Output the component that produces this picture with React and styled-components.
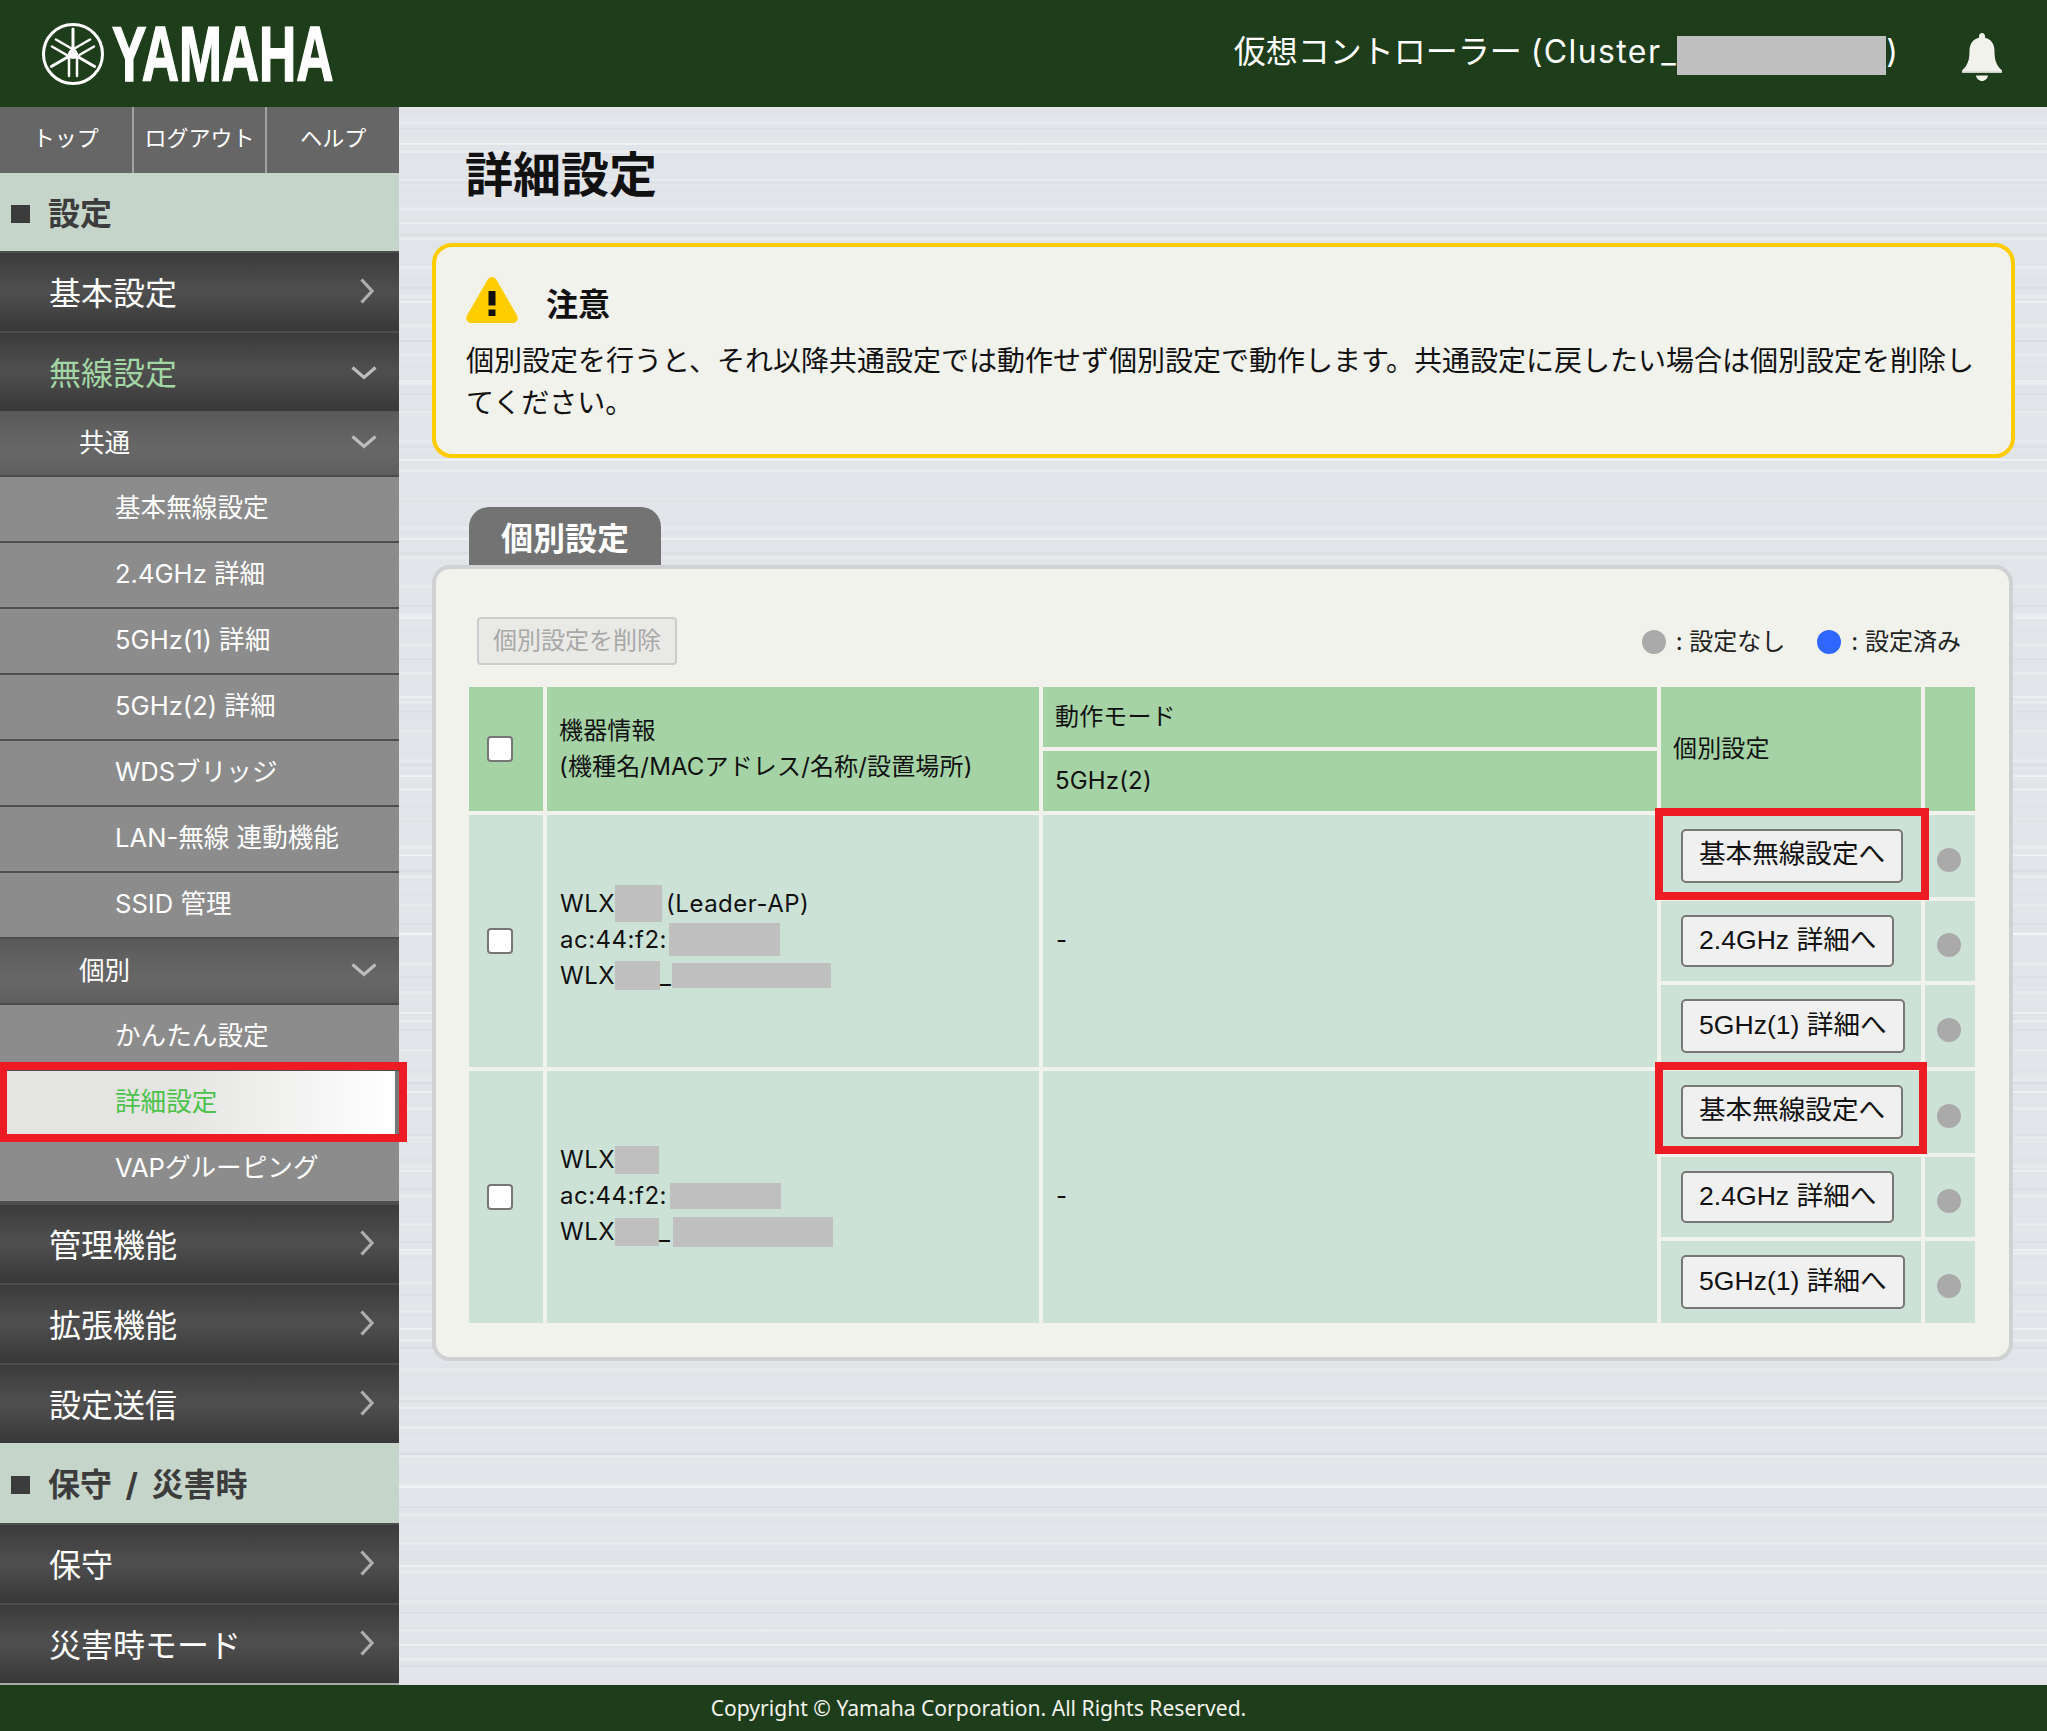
import React from "react";
import styled, { createGlobalStyle } from "styled-components";

const GlobalStyle = createGlobalStyle`
  html, body {
    margin: 0;
    padding: 0;
  }
  body {
    font-family: Inter, "Noto Sans CJK JP", sans-serif;
    color: #111;
  }
  * {
    box-sizing: border-box;
  }
`;

const Page = styled.div`
  width: 2047px;
  height: 1731px;
  display: flex;
  flex-direction: column;
  overflow: hidden;
`;

const Header = styled.header`
  height: 107px;
  flex: none;
  background: #1e3d1a;
  display: flex;
  align-items: center;
  padding: 0 45px 0 41px;
`;

const ControllerName = styled.div`
  margin-left: auto;
  padding-bottom: 3px;
  display: flex;
  align-items: center;
  color: #fff;
  font-size: 32px;
  line-height: 40px;
  white-space: pre;
`;

const LatinPart = styled.span`
  letter-spacing: 1.4px;
`;

const BellWrap = styled.div`
  margin-left: 64px;
  width: 40px;
  height: 48px;
  margin-top: 7px;
`;

const Middle = styled.div`
  flex: 1;
  display: flex;
  min-height: 0;
`;

const Sidebar = styled.nav`
  width: 399px;
  flex: none;
  display: flex;
  flex-direction: column;
  border-bottom: 2px solid #a9a9a9;
  position: relative;
  z-index: 2;
`;

const UtilBar = styled.div`
  height: 66px;
  display: flex;
  background: #666;
`;

const UtilLink = styled.a`
  flex: 1;
  display: flex;
  align-items: center;
  justify-content: center;
  padding-bottom: 8px;
  color: #fff;
  font-size: 22px;
  & + & {
    border-left: 2px solid #a3a3a3;
  }
`;

const SectionHead = styled.div`
  height: ${(p) => p.$height}px;
  display: flex;
  align-items: center;
  padding: 0 0 2px 11px;
  background: #c6d5ca;
  color: #3c3c3c;
  font-size: 32px;
  font-weight: 700;
  word-spacing: 6px;
`;

const SectionMark = styled.span`
  width: 19px;
  height: 18px;
  margin: 6px 18px 0 0;
  background: #3c3c3c;
`;

const TopItem = styled.div`
  height: 80px;
  display: flex;
  align-items: center;
  justify-content: space-between;
  padding: 0 22px 0 49px;
  font-size: 32px;
  color: ${(p) => (p.$open ? "#a3d6a5" : "#fff")};
  background: linear-gradient(180deg, #3a3a3a 0%, #4f4f4f 50%, #383838 100%);
  box-shadow: inset 0 2px 0 #4d4d4d;
`;

const SubItem = styled.div`
  height: 66px;
  display: flex;
  align-items: center;
  justify-content: space-between;
  padding: 0 22px 6px 79px;
  font-size: 25.6px;
  color: #fff;
  background: linear-gradient(180deg, #5a5a5a 0%, #676767 60%, #5f5f5f 100%);
  border-bottom: 2px solid #4a4a4a;
`;

const LeafItem = styled.div`
  height: 66px;
  display: flex;
  align-items: center;
  padding: 0 0 8px 115px;
  font-size: 25.6px;
  color: ${(p) => (p.$active ? "#4cc24c" : "#fff")};
  background: ${(p) =>
    p.$active
      ? "linear-gradient(90deg, #e4e4e2 0%, #e4e4e2 45%, #fff 100%)"
      : "#8c8c8c"};
  border-bottom: 2px solid #4f4f4f;
  border-right: ${(p) => (p.$active ? "4px solid #777" : "none")};
  position: relative;
`;

const SideMarker = styled.span`
  position: absolute;
  z-index: 1;
  top: -9px;
  bottom: -7px;
  left: 0;
  right: -12px;
  border: 8px solid #ed1c24;
  border-left-width: 7px;
`;

const Main = styled.main`
  flex: 1;
  min-width: 0;
  padding: 34px 32px 0 33px;
  background-color: #e1e4e8;
  background-image:
    repeating-linear-gradient(180deg, rgba(255,255,255,0) 0 36px, rgba(255,255,255,.4) 36px 38px, rgba(255,255,255,0) 38px 79px),
    repeating-linear-gradient(180deg, rgba(255,255,255,0) 0 14px, rgba(255,255,255,.22) 14px 17px, rgba(255,255,255,0) 17px 29px),
    repeating-linear-gradient(180deg, rgba(110,115,125,0) 0 21px, rgba(110,115,125,.05) 21px 23px, rgba(110,115,125,0) 23px 53px),
    repeating-linear-gradient(180deg, rgba(255,255,255,.1) 0 2px, rgba(255,255,255,0) 2px 11px);
`;

const PageTitle = styled.h1`
  margin: 0 0 34px 33px;
  font-size: 48px;
  line-height: 68px;
  font-weight: 700;
  color: #111;
`;

const Notice = styled.section`
  height: 215px;
  background: #f1f2ec;
  border: 4px solid #fc0;
  border-radius: 20px;
  padding: 30px 30px 0;
`;

const NoticeHead = styled.div`
  display: flex;
  align-items: center;
  height: 46px;
  gap: 28px;
  margin-bottom: 17px;
  font-size: 32px;
  font-weight: 700;
`;

const NoticeLabel = styled.span`
  padding-top: 4px;
`;

const NoticeBody = styled.p`
  margin: 0;
  font-size: 28px;
  line-height: 42px;
`;

const Tab = styled.div`
  width: 192px;
  height: 58px;
  margin: 49px 0 0 37px;
  background: #737373;
  border-radius: 20px 20px 0 0;
  color: #fff;
  font-size: 32px;
  font-weight: 700;
  display: flex;
  align-items: center;
  justify-content: center;
`;

const Panel = styled.section`
  width: 1581px;
  height: 796px;
  background: #f1f2ec;
  border: 4px solid #cfd1d3;
  border-radius: 18px;
  padding: 48px 34px 0 33px;
`;

const Toolbar = styled.div`
  height: 48px;
  margin-bottom: 22px;
  padding: 0 14px 0 8px;
  display: flex;
  align-items: center;
  justify-content: space-between;
`;

const DeleteButton = styled.button`
  width: 200px;
  height: 48px;
  padding: 0 0 5px;
  font-family: inherit;
  font-size: 24px;
  color: #a8a8a8;
  background: #e9e9e6;
  border: 2px solid #ccc;
  border-radius: 4px;
`;

const Legend = styled.div`
  display: flex;
  align-items: center;
  gap: 32px;
  font-size: 24px;
  color: #222;
`;

const LegendItem = styled.span`
  display: flex;
  align-items: center;
  gap: 10px;
  padding-bottom: 3px;
`;

const Dot = styled.span`
  display: block;
  width: 24px;
  height: 24px;
  border-radius: 50%;
  background: ${(p) => (p.$blue ? "#2f66ff" : "#aaa")};
`;

const LegendDot = styled(Dot)`
  margin-top: 5px;
`;

const Table = styled.table`
  table-layout: fixed;
  width: 1510px;
  margin: -4px;
  border-collapse: separate;
  border-spacing: 4px;
  font-size: 24px;
  line-height: 36px;
  color: #111;
`;

const HeadCell = styled.th`
  height: ${(p) => p.$height || 60}px;
  padding: 0 12px 1px;
  font-weight: 400;
  text-align: left;
  letter-spacing: 0.15px;
  background: #a5d3a5;
`;

const BoxHead = styled(HeadCell)`
  padding: 0;
`;

const Cell = styled.td`
  height: ${(p) => p.$height || 82}px;
  padding: 0 13px 3px;
  background: #cde2d6;
  position: relative;
`;

const BoxCell = styled(Cell)`
  padding: 0;
`;

const ButtonCell = styled(Cell)`
  padding: 0 0 0 20px;
`;

const DotCell = styled(Cell)`
  padding: 7px 0 0 12px;
`;

const Check = styled.input.attrs({ type: "checkbox" })`
  appearance: none;
  display: block;
  width: 26px;
  height: 26px;
  margin: 0 0 0 18px;
  background: #fff;
  border: 2px solid #767676;
  border-radius: 4px;
`;

const GoButton = styled.button`
  display: block;
  height: ${(p) => p.$height || 54}px;
  padding: 0 16px ${(p) => p.$lift || 8}px;
  font-family: "Liberation Sans", "Noto Sans CJK JP", sans-serif;
  font-size: 26.6px;
  color: #111;
  background: #f0f0f0;
  border: 2px solid #777;
  border-radius: 5px;
  white-space: nowrap;
`;

const CellMarker = styled.span`
  position: absolute;
  left: -6px;
  right: ${(p) => p.$right}px;
  top: ${(p) => p.$top}px;
  bottom: ${(p) => p.$bottom}px;
  border: 8px solid #ed1c24;
  z-index: 1;
`;

const Line = styled.div`
  display: flex;
  align-items: center;
  height: 36px;
  white-space: pre;
  letter-spacing: 0.5px;
`;

const Redact = styled.span`
  flex: none;
  display: block;
  width: ${(p) => p.$w}px;
  height: ${(p) => p.$h}px;
  margin: ${(p) => p.$top || 0}px ${(p) => p.$right || 0}px 0 ${(p) => p.$left || 0}px;
  background: #c0c0c0;
`;

const Footer = styled.footer`
  height: 46px;
  flex: none;
  background: #1e3d1a;
  color: #f1f2ec;
  font-family: "Noto Sans", sans-serif;
  font-size: 21.1px;
  display: flex;
  align-items: center;
  justify-content: center;
  padding: 0 90px 2px 0;
`;

const Chevron = styled.svg`
  flex: none;
  margin: ${(p) => p.$margin};
`;

function Logo() {
  const fork = (
    <g fill="none" stroke="#fff" strokeWidth="2.500" strokeLinecap="round">
      <path d="M32 7 L32 32" strokeWidth="3" />
      <path d="M28 54 V33 a4 4 0 0 1 8 0 V54" />
    </g>
  );
  return (
    <svg width="430" height="80" viewBox="0 -8 430 80">
      <circle cx="32" cy="32" r="29.5" fill="none" stroke="#fff" strokeWidth="3" />
      {fork}
      <g transform="rotate(120 32 32)">{fork}</g>
      <g transform="rotate(240 32 32)">{fork}</g>
      <text
        transform="translate(71 59) scale(0.67 1)"
        fill="#fff"
        stroke="#fff"
        strokeWidth="1.500"
        fontFamily="Liberation Sans, sans-serif"
        fontWeight="700"
        fontSize="77"
      >
        YAMAHA
      </text>
    </svg>
  );
}

function Bell() {
  return (
    <svg width="40" height="48" viewBox="0 0 40 48">
      <path
        fill="#f1f2ec"
        d="M20 0c1.8 0 3 1.4 3 3.2v1.6C29.4 6.2 32.5 11.6 32.5 18c0 9 1.6 14 7.5 19.5V40H0v-2.5C5.900 32 7.500 27 7.500 18 7.500 11.600 10.600 6.200 17 4.800V3.200C17 1.400 18.200 0 20 0z"
      />
      <path fill="#c9cdc4" d="M0 38.500h40V40H0z" />
      <path fill="#f1f2ec" d="M14 42.500h12c-.6 3.200-3 5.500-6 5.500s-5.400-2.300-6-5.500z" />
    </svg>
  );
}

function Warning() {
  return (
    <svg width="52" height="46" viewBox="0 0 52 46">
      <path
        fill="#fc0"
        d="M21.700 2.500c2-3.300 6.600-3.300 8.600 0l20.800 36c1.900 3.300-.4 7.500-4.300 7.500H5.200C1.300 46-1 41.800.9 38.500z"
      />
      <path fill="#111" d="M22.500 14h7v14.500h-7zM22.500 32.500h7v6.500h-7z" />
    </svg>
  );
}

function ChevronRight() {
  return (
    <Chevron width="14" height="26" viewBox="0 0 14 26" $margin="0 3px 0 0">
      <path d="M1.500 1.500 L12 13 L1.500 24.500" fill="none" stroke="#aeaeae" strokeWidth="3.200" />
    </Chevron>
  );
}

function ChevronDown() {
  return (
    <Chevron width="26" height="14" viewBox="0 0 26 14" $margin="3px 0 0 0">
      <path d="M1.500 1.500 L13 11.500 L24.500 1.500" fill="none" stroke="#bdbdbd" strokeWidth="3.200" />
    </Chevron>
  );
}

const leaves1 = [
  "基本無線設定",
  "2.4GHz 詳細",
  "5GHz(1) 詳細",
  "5GHz(2) 詳細",
  "WDSブリッジ",
  "LAN-無線 連動機能",
  "SSID 管理",
];

function Side() {
  return (
    <Sidebar>
      <UtilBar>
        <UtilLink>トップ</UtilLink>
        <UtilLink>ログアウト</UtilLink>
        <UtilLink>ヘルプ</UtilLink>
      </UtilBar>
      <SectionHead $height={78}>
        <SectionMark />
        設定
      </SectionHead>
      <TopItem>
        基本設定
        <ChevronRight />
      </TopItem>
      <TopItem $open>
        無線設定
        <ChevronDown />
      </TopItem>
      <SubItem>
        共通
        <ChevronDown />
      </SubItem>
      {leaves1.map((name) => (
        <LeafItem key={name}>{name}</LeafItem>
      ))}
      <SubItem>
        個別
        <ChevronDown />
      </SubItem>
      <LeafItem>かんたん設定</LeafItem>
      <LeafItem $active>
        詳細設定
        <SideMarker />
      </LeafItem>
      <LeafItem>VAPグルーピング</LeafItem>
      {["管理機能", "拡張機能", "設定送信"].map((name) => (
        <TopItem key={name}>
          {name}
          <ChevronRight />
        </TopItem>
      ))}
      <SectionHead $height={80}>
        <SectionMark />
        保守 / 災害時
      </SectionHead>
      {["保守", "災害時モード"].map((name) => (
        <TopItem key={name}>
          {name}
          <ChevronRight />
        </TopItem>
      ))}
    </Sidebar>
  );
}

function DeviceRows({ info, marker }) {
  return (
    <>
      <tr>
        <BoxCell rowSpan={3}>
          <Check />
        </BoxCell>
        <Cell rowSpan={3}>{info}</Cell>
        <Cell rowSpan={3}>-</Cell>
        <ButtonCell>
          <GoButton $lift={10}>基本無線設定へ</GoButton>
          {marker}
        </ButtonCell>
        <DotCell>
          <Dot />
        </DotCell>
      </tr>
      <tr>
        <ButtonCell $height={80}>
          <GoButton $height={52}>2.4GHz 詳細へ</GoButton>
        </ButtonCell>
        <DotCell $height={80}>
          <Dot />
        </DotCell>
      </tr>
      <tr>
        <ButtonCell>
          <GoButton>5GHz(1) 詳細へ</GoButton>
        </ButtonCell>
        <DotCell>
          <Dot />
        </DotCell>
      </tr>
    </>
  );
}

export default function App() {
  return (
    <>
      <GlobalStyle />
      <Page>
        <Header>
          <Logo />
          <ControllerName>
            仮想コントローラー <LatinPart>(Cluster_</LatinPart>
            <Redact $w={209} $h={39} $top={7} />)
          </ControllerName>
          <BellWrap>
            <Bell />
          </BellWrap>
        </Header>
        <Middle>
          <Side />
          <Main>
            <PageTitle>詳細設定</PageTitle>
            <Notice>
              <NoticeHead>
                <Warning />
                <NoticeLabel>注意</NoticeLabel>
              </NoticeHead>
              <NoticeBody>
                個別設定を行うと、それ以降共通設定では動作せず個別設定で動作します。共通設定に戻したい場合は個別設定を削除してください。
              </NoticeBody>
            </Notice>
            <Tab>個別設定</Tab>
            <Panel>
              <Toolbar>
                <DeleteButton disabled>個別設定を削除</DeleteButton>
                <Legend>
                  <LegendItem>
                    <LegendDot />: 設定なし
                  </LegendItem>
                  <LegendItem>
                    <LegendDot $blue />: 設定済み
                  </LegendItem>
                </Legend>
              </Toolbar>
              <Table>
                <colgroup>
                  <col style={{ width: 74 }} />
                  <col style={{ width: 492 }} />
                  <col style={{ width: 614 }} />
                  <col style={{ width: 260 }} />
                  <col style={{ width: 50 }} />
                </colgroup>
                <thead>
                  <tr>
                    <BoxHead rowSpan={2}>
                      <Check />
                    </BoxHead>
                    <HeadCell rowSpan={2}>
                      機器情報
                      <br />
                      (機種名/MACアドレス/名称/設置場所)
                    </HeadCell>
                    <HeadCell>動作モード</HeadCell>
                    <HeadCell rowSpan={2}>個別設定</HeadCell>
                    <HeadCell rowSpan={2} />
                  </tr>
                  <tr>
                    <HeadCell>5GHz(2)</HeadCell>
                  </tr>
                </thead>
                <tbody>
                  <DeviceRows
                    marker={<CellMarker $right={-8} $top={-7} $bottom={-3} />}
                    info={
                      <>
                        <Line>
                          WLX
                          <Redact $w={47} $h={37} $right={4} />
                          (Leader-AP)
                        </Line>
                        <Line>
                          ac:44:f2:
                          <Redact $w={111} $h={33} $left={2} />
                        </Line>
                        <Line>
                          WLX
                          <Redact $w={45} $h={29} />_
                          <Redact $w={159} $h={25} />
                        </Line>
                      </>
                    }
                  />
                  <DeviceRows
                    marker={<CellMarker $right={-6} $top={-9} $bottom={-1} />}
                    info={
                      <>
                        <Line>
                          WLX
                          <Redact $w={44} $h={28} />
                        </Line>
                        <Line>
                          ac:44:f2:
                          <Redact $w={111} $h={26} $left={3} />
                        </Line>
                        <Line>
                          WLX
                          <Redact $w={44} $h={28} />_
                          <Redact $w={160} $h={30} $left={2} />
                        </Line>
                      </>
                    }
                  />
                </tbody>
              </Table>
            </Panel>
          </Main>
        </Middle>
        <Footer>Copyright © Yamaha Corporation. All Rights Reserved.</Footer>
      </Page>
    </>
  );
}
